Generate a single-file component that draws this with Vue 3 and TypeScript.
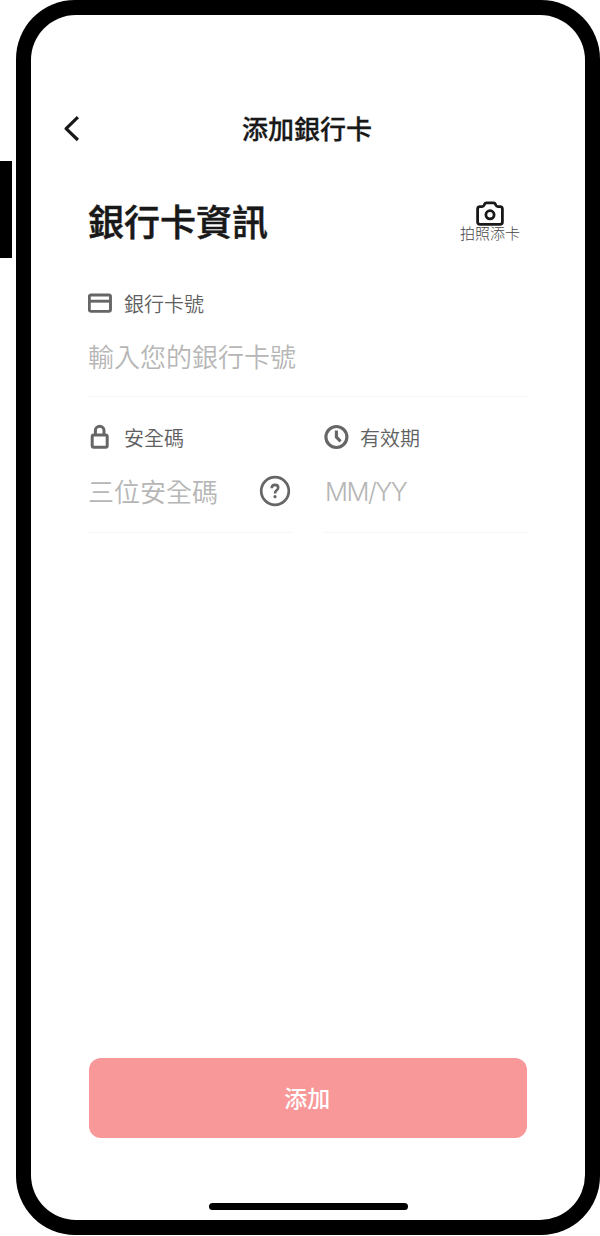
<script setup lang="ts">
import { ref } from 'vue'

const cardNumber = ref<string>('')
const securityCode = ref<string>('')
const expiry = ref<string>('')
</script>

<template>
  <div class="stage">
    <span class="side-button"></span>
    <main class="phone">
      <header class="nav">
        <svg class="back" viewBox="0 0 20 28" fill="none" stroke="#181818" stroke-width="3.200">
          <path d="M16.900 3.200 5.100 14.600l11.800 11.400" stroke-linejoin="round" />
        </svg>
        <h1>添加銀行卡</h1>
      </header>

      <section class="heading">
        <h2>銀行卡資訊</h2>
        <div class="scan">
          <svg viewBox="0 0 28 25" width="28" height="25" fill="none" stroke="#181818">
            <path
              d="M4 5.6h2.1c1 0 1.600-.4 2-1.300l.4-1c.4-1 1-1.400 2-1.400h7c1 0 1.600.4 2 1.400l.4 1c.4.9 1 1.300 2 1.300H24c1.500 0 2.400.9 2.400 2.400v13c0 1.500-.9 2.400-2.400 2.400H4c-1.500 0-2.400-.9-2.400-2.400V8c0-1.500.9-2.400 2.400-2.400Z"
              stroke-width="2.800"
            />
            <circle cx="14" cy="13.800" r="4.100" stroke-width="2.800" />
          </svg>
          <span>拍照添卡</span>
        </div>
      </section>

      <label class="field field-card">
        <span class="caption">
          <svg viewBox="0 0 26 26" fill="none" stroke="#666" stroke-width="2.900">
            <rect x="1.300" y="5" width="21.200" height="16.400" rx="1.800" />
            <path d="M1.300 11.200h21.200" />
          </svg>
          <span class="caption-text">銀行卡號</span>
        </span>
        <span class="entry"><input v-model="cardNumber" placeholder="輸入您的銀行卡號" /></span>
      </label>

      <div class="pair">
        <label class="field">
          <span class="caption">
            <svg viewBox="0 0 26 26" fill="none" stroke="#666" stroke-width="3">
              <rect x="4.200" y="11" width="15" height="12.200" rx="1.500" />
              <path d="M7.400 11V6.500a4.300 4.300 0 0 1 8.600 0V11" />
            </svg>
            <span class="caption-text">安全碼</span>
          </span>
          <span class="entry">
            <input v-model="securityCode" placeholder="三位安全碼" />
            <svg class="help" viewBox="0 0 32 32" fill="none" stroke="#666">
              <circle cx="16" cy="16" r="13.800" stroke-width="2.700" />
              <path d="M12.700 13.300c0-2.200 1.400-3.400 3.300-3.400s3.200 1.100 3.200 2.900c0 2.500-3.100 2.500-3.100 5.100v.5" stroke-width="2.600" />
              <circle cx="16" cy="21.700" r="1.600" fill="#666" stroke="none" />
            </svg>
          </span>
        </label>
        <label class="field">
          <span class="caption">
            <svg viewBox="0 0 26 26" fill="none" stroke="#666" stroke-width="3.100">
              <circle cx="12.400" cy="13" r="10.500" />
              <path d="M12.400 6.500V13l4.200 4.300" />
            </svg>
            <span class="caption-text">有效期</span>
          </span>
          <span class="entry"><input v-model="expiry" class="latin" placeholder="MM/YY" /></span>
        </label>
      </div>

      <button class="submit" type="button">添加</button>
      <div class="home-bar"></div>
    </main>
  </div>
</template>

<style>
body {
  margin: 0;
  background: #fff;
}
</style>

<style scoped>
.stage {
  display: flex;
  width: 600px;
  height: 1236px;
  overflow: hidden;
  font-family: "Noto Sans CJK TC", sans-serif;
  color: #181818;
}
.side-button {
  flex: none;
  width: 12px;
  height: 97.500px;
  margin: 160.500px 4px 0 0;
  background: #000;
}
.phone {
  flex: none;
  box-sizing: border-box;
  display: flex;
  flex-direction: column;
  width: 584px;
  height: 1235.400px;
  padding: 14.600px 15px 15px;
  border-radius: 59px;
  position: relative;
  background: #000;
  z-index: 0;
}
.phone::before {
  content: "";
  position: absolute;
  z-index: -1;
  inset: 14.600px 14.600px 15px 15px;
  border-radius: 45px;
  background: #fff;
}
.nav {
  display: flex;
  align-items: center;
  height: 40px;
  margin-top: 93.400px;
  padding-left: 30px;
}
.back {
  width: 20px;
  height: 28px;
}
h1 {
  flex: 1;
  margin: 0 52px 0 0;
  text-align: center;
  font-size: 26px;
  line-height: 40px;
  font-weight: 500;
  -webkit-text-stroke: 0.3px #181818;
}
.heading {
  display: flex;
  justify-content: space-between;
  height: 60px;
  margin: 46px 65px 0 57px;
}
h2 {
  margin: 0;
  font-size: 36px;
  line-height: 52px;
  font-weight: 500;
  -webkit-text-stroke: 0.5px #181818;
}
.scan {
  display: flex;
  flex-direction: column;
  align-items: center;
  padding-top: 6.600px;
  font-size: 15px;
  line-height: 14px;
  font-weight: 300;
  color: #444;
}
.field {
  display: flex;
  flex-direction: column;
}
.field-card {
  margin: 36px 57px 0;
}
.caption {
  display: flex;
  align-items: center;
  gap: 10px;
  height: 26px;
  font-size: 20px;
  line-height: 26px;
  font-weight: 350;
  color: #606060;
}
.caption-text {
  padding-top: 2px;
}
.caption svg {
  width: 26px;
  height: 26px;
}
.entry {
  display: flex;
  align-items: center;
  height: 80px;
  border-bottom: 1.500px solid #f6f6f6;
}
input {
  flex: 1;
  min-width: 0;
  height: 40px;
  padding: 0;
  border: 0;
  outline: 0;
  background: transparent;
  font: 350 26px/40px "Noto Sans CJK TC", sans-serif;
  color: #181818;
}
input::placeholder {
  color: #b6b6b6;
  opacity: 1;
}
.latin {
  padding: 3px 0 0 1px;
  font-family: Inter, "Noto Sans CJK TC", sans-serif;
  font-size: 25.500px;
  letter-spacing: -1.500px;
}
.help {
  width: 32px;
  height: 32px;
  margin: 0 1px 0 -1px;
}
.pair {
  display: grid;
  grid-template-columns: 204px 204px;
  gap: 32px;
  margin: 27px 57px 0;
}
.pair .entry {
  height: 82px;
}
.submit {
  height: 80.400px;
  margin: auto 58px 0 57.500px;
  padding: 0 1px 2px 0;
  border: 0;
  border-radius: 12px;
  background: #f89898;
  color: #fff;
  font: 500 23px/78px "Noto Sans CJK TC", sans-serif;
}
.home-bar {
  align-self: center;
  width: 199px;
  height: 7.500px;
  margin: 65px 0 10px;
  border-radius: 4px;
  background: #000;
}
</style>
